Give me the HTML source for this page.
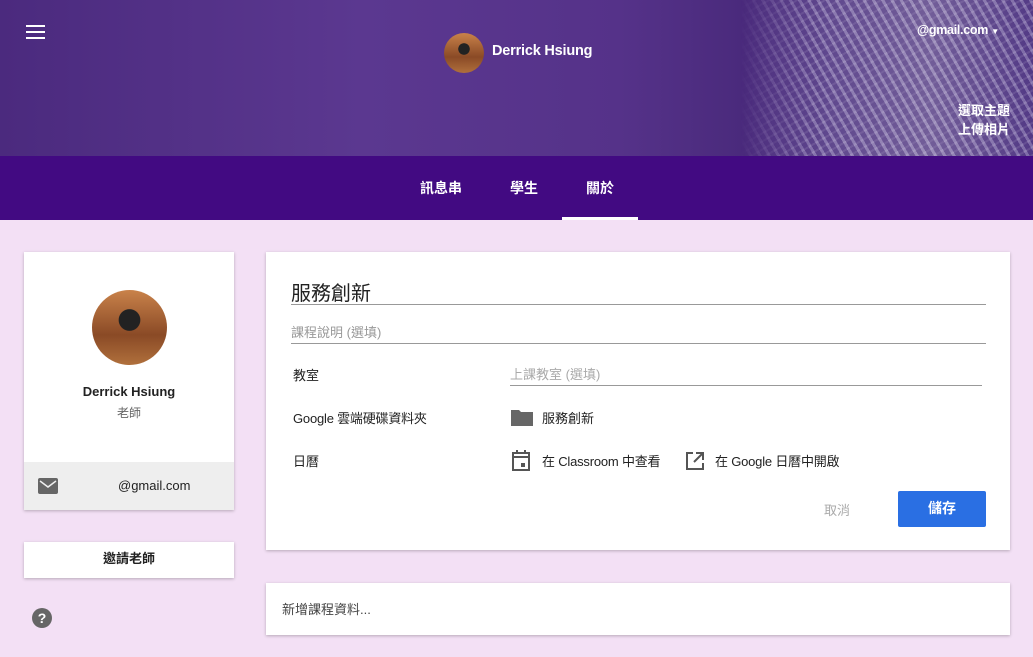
<!DOCTYPE html>
<html><head><meta charset="utf-8"><style>
*{margin:0;padding:0;box-sizing:border-box}
body{width:1033px;height:657px;overflow:hidden;background:#f3e0f5;font-family:"Liberation Sans","Noto Sans CJK TC",sans-serif;position:relative;color:#222}
.hdr{position:absolute;left:0;top:0;width:1033px;height:156px;background:linear-gradient(90deg,#4b2a7e 0%,#5b3890 35%,#553289 60%,#4a2a7c 72%,#6f5a9c 80%,#8a7aac 90%,#5d4690 100%)}
.tex{position:absolute;left:740px;top:0;width:293px;height:156px;background:repeating-linear-gradient(60deg,rgba(200,190,220,.3) 0 3px,rgba(60,30,110,.3) 3px 8px),repeating-linear-gradient(-30deg,rgba(220,210,235,.2) 0 2px,transparent 2px 7px);mask-image:linear-gradient(90deg,transparent,#000 25%);-webkit-mask-image:linear-gradient(90deg,transparent,#000 25%)}
.nav{position:absolute;left:0;top:156px;width:1033px;height:64px;background:#420a82}
.tab{position:absolute;top:178px;color:#fff;font-size:14px;font-weight:bold}
.card{position:absolute;background:#fff;box-shadow:0 1px 3px rgba(0,0,0,.25)}
.w{color:#fff;position:absolute}
.lbl{position:absolute;font-size:13px;color:#222}
.av{border-radius:50%;background:radial-gradient(circle at 50% 40%,#222 0 18%,transparent 19%),linear-gradient(180deg,#c9824a,#8a4a26 60%,#b0703c)}
</style></head><body>
<div class="hdr"></div><div class="tex"></div>
<div style="position:absolute;left:26px;top:25px;width:19px;height:14px;border-top:2px solid #fff;border-bottom:2px solid #fff"><div style="margin-top:4px;height:2px;background:#fff"></div></div>
<div class="av" style="position:absolute;left:444px;top:33px;width:40px;height:40px"></div>
<div class="w" style="left:492px;top:43px;font-size:14.5px;font-weight:bold;letter-spacing:-.2px">Derrick Hsiung</div>
<div class="w" style="left:917px;top:23px;font-size:12.5px;font-weight:bold;letter-spacing:-.3px">@gmail.com <span style="font-size:8px">▼</span></div>
<div class="w" style="left:958px;top:100px;font-size:13px;font-weight:bold">選取主題</div>
<div class="w" style="left:958px;top:119px;font-size:13px;font-weight:bold">上傳相片</div>
<div class="nav"></div>
<div class="tab" style="left:420px">訊息串</div>
<div class="tab" style="left:510px">學生</div>
<div class="tab" style="left:586px">關於</div>
<div style="position:absolute;left:562px;top:217px;width:76px;height:3px;background:#fff"></div>

<div class="card" style="left:24px;top:252px;width:210px;height:258px">
<div class="av" style="position:absolute;left:68px;top:38px;width:75px;height:75px"></div>
<div style="position:absolute;top:132px;width:100%;text-align:center;font-size:13px;font-weight:bold">Derrick Hsiung</div>
<div style="position:absolute;top:152px;width:100%;text-align:center;font-size:12px;color:#666">老師</div>
<div style="position:absolute;left:0;top:210px;width:100%;height:48px;background:#eee">
<div style="position:absolute;left:14px;top:16px;width:20px;height:16px;background:#666;border-radius:2px"><svg width="20" height="16"><path d="M2 3l8 6 8-6" stroke="#eee" stroke-width="1.5" fill="none"/></svg></div>
<div style="position:absolute;left:94px;top:16px;font-size:13px">@gmail.com</div></div>
</div>
<div class="card" style="left:24px;top:542px;width:210px;height:36px;text-align:center;line-height:34px;font-size:13px;font-weight:bold">邀請老師</div>
<div style="position:absolute;left:32px;top:608px;width:20px;height:20px;border-radius:50%;background:#666;color:#fff;font-size:14px;font-weight:bold;text-align:center;line-height:20px">?</div>

<div class="card" style="left:266px;top:252px;width:744px;height:298px">
<div style="position:absolute;left:25px;top:25px;font-size:20px">服務創新</div>
<div style="position:absolute;left:25px;top:52px;width:695px;height:1px;background:#999"></div>
<div style="position:absolute;left:25px;top:70px;font-size:13px;color:#999">課程說明 (選填)</div>
<div style="position:absolute;left:25px;top:91px;width:695px;height:1px;background:#999"></div>
<div class="lbl" style="left:27px;top:113px">教室</div>
<div style="position:absolute;left:244px;top:112px;font-size:13px;color:#aaa">上課教室 (選填)</div>
<div style="position:absolute;left:244px;top:133px;width:472px;height:1px;background:#999"></div>
<div class="lbl" style="left:27px;top:156px;letter-spacing:-.2px">Google 雲端硬碟資料夾</div>
<svg style="position:absolute;left:245px;top:157px" width="22" height="18"><path d="M0 1h8l2 2h12v14H0z" fill="#666"/></svg>
<div class="lbl" style="left:276px;top:156px">服務創新</div>
<div class="lbl" style="left:27px;top:199px">日曆</div>
<svg style="position:absolute;left:245px;top:198px" width="20" height="22"><path d="M2 3h16v17H2zM2 7h16" stroke="#555" stroke-width="2" fill="none"/><rect x="5" y="0" width="2" height="4" fill="#555"/><rect x="13" y="0" width="2" height="4" fill="#555"/><rect x="10" y="13" width="4" height="4" fill="#555"/></svg>
<div class="lbl" style="left:276px;top:199px;letter-spacing:-.2px">在 Classroom 中查看</div>
<svg style="position:absolute;left:419px;top:199px" width="20" height="20"><path d="M8 2H2v16h16v-6M11 2h7v7M18 2l-9 9" stroke="#555" stroke-width="2" fill="none"/></svg>
<div class="lbl" style="left:449px;top:199px;letter-spacing:-.2px">在 Google 日曆中開啟</div>
<div style="position:absolute;left:558px;top:248px;font-size:13px;color:#aaa">取消</div>
<div style="position:absolute;left:632px;top:239px;width:88px;height:36px;background:#2a6fe3;border-radius:2px;color:#fff;text-align:center;line-height:34px;font-size:14px;font-weight:bold">儲存</div>
</div>
<div class="card" style="left:266px;top:583px;width:744px;height:52px"><div style="position:absolute;left:16px;top:16px;font-size:13px;color:#444">新增課程資料...</div></div>
</body></html>
